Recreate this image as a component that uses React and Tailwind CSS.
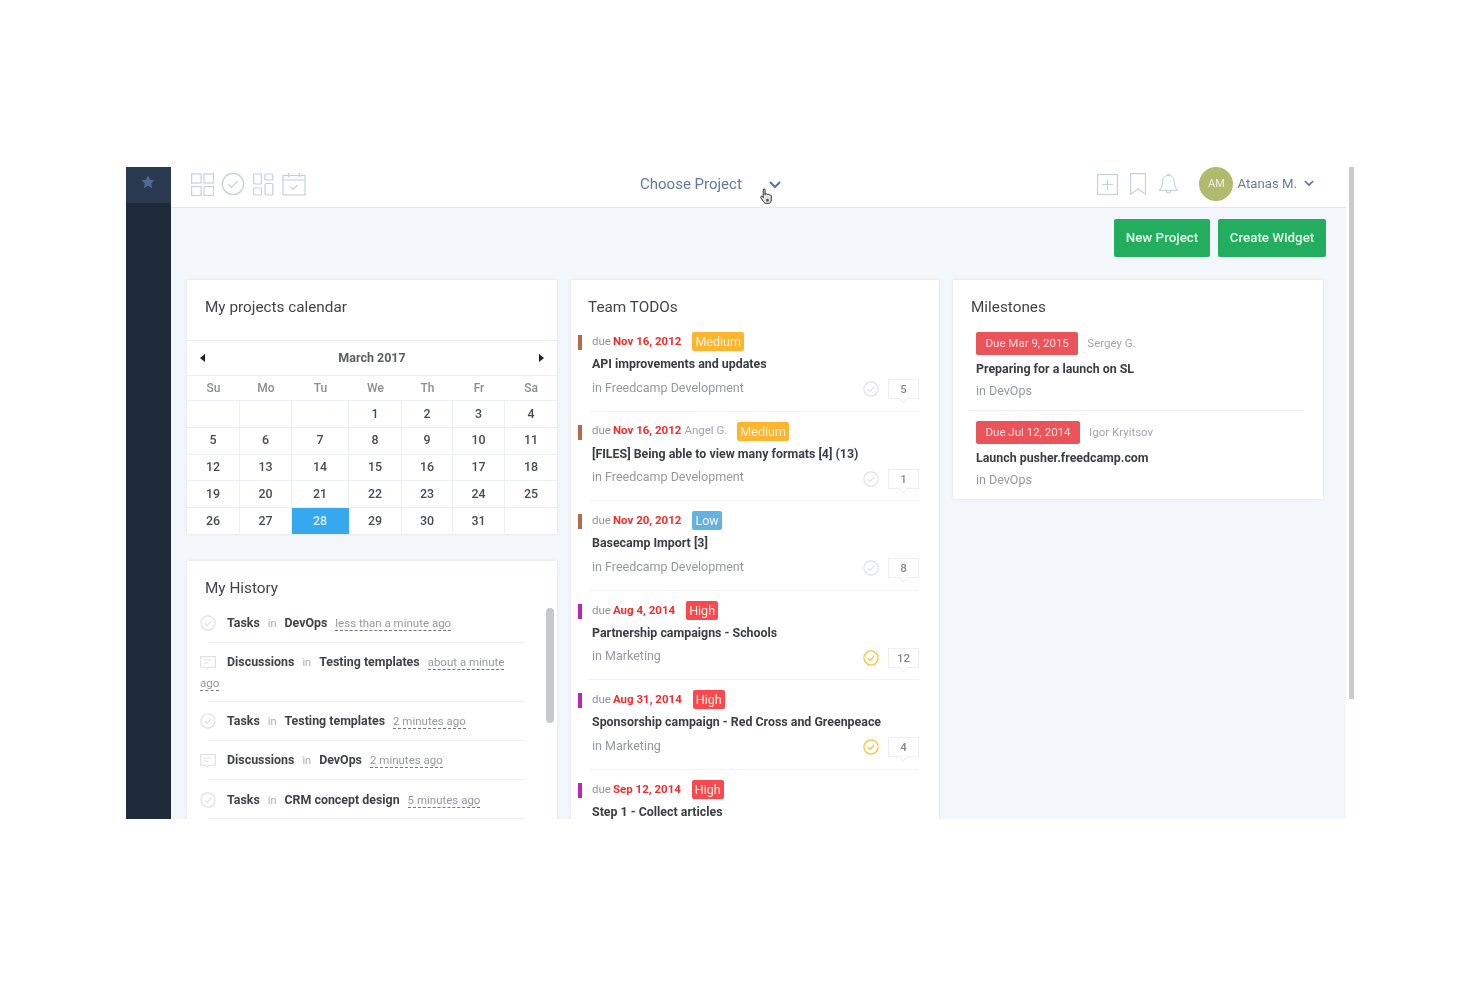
import React from "react";

const WEEKS = [
    ["", "", "", 1, 2, 3, 4],
    [5, 6, 7, 8, 9, 10, 11],
    [12, 13, 14, 15, 16, 17, 18],
    [19, 20, 21, 22, 23, 24, 25],
    [26, 27, 28, 29, 30, 31, ""],
];
const DAYS = ["Su", "Mo", "Tu", "We", "Th", "Fr", "Sa"];

const TODOS = [
    { date: "Nov 16, 2012", level: "Medium", bar: "bg-[#b5694a]", title: "API improvements and updates", project: "Freedcamp Development", count: 5 },
    { date: "Nov 16, 2012", who: "Angel G.", level: "Medium", bar: "bg-[#b5694a]", title: "[FILES] Being able to view many formats [4] (13)", project: "Freedcamp Development", count: 1 },
    { date: "Nov 20, 2012", level: "Low", bar: "bg-[#b5694a]", title: "Basecamp Import [3]", project: "Freedcamp Development", count: 8 },
    { date: "Aug 4, 2014", level: "High", bar: "bg-[#b726b5]", title: "Partnership campaigns - Schools", project: "Marketing", count: 12, active: true },
    { date: "Aug 31, 2014", level: "High", bar: "bg-[#b726b5]", title: "Sponsorship campaign - Red Cross and Greenpeace", project: "Marketing", count: 4, active: true },
    { date: "Sep 12, 2014", level: "High", bar: "bg-[#b726b5]", title: "Step 1 - Collect articles" },
];

const LEVEL_CLASS = {
    Medium: "bg-[#fdb52f]",
    Low: "bg-[#62b3e3]",
    High: "bg-[#f9484f]",
};

const HISTORY = [
    { kind: "Tasks", project: "DevOps", ago: "less than a minute ago", cls: "h-[39px] pt-[8.5px]" },
    { kind: "Discussions", project: "Testing templates", ago: "about a minute ago", cls: "h-[59px] pt-[8.5px]" },
    { kind: "Tasks", project: "Testing templates", ago: "2 minutes ago", cls: "h-[39px] pt-[8.5px]" },
    { kind: "Discussions", project: "DevOps", ago: "2 minutes ago", cls: "h-[39px] pt-[8.5px]" },
    { kind: "Tasks", project: "CRM concept design", ago: "5 minutes ago", cls: "h-[39px] pt-[9.5px]" },
];

const CheckCircle = ({ className, weight = 1.2 }) => (
    <svg viewBox="0 0 16 16" fill="none" stroke="currentColor" strokeWidth={weight} className={className}>
        <circle cx="8" cy="8" r="7.1" />
        <path d="M4.8 8.2l2.2 2.2 4.2-4.4" />
    </svg>
);

const CommentIcon = () => (
    <svg viewBox="0 0 16 16" fill="none" stroke="#dfe1e4" strokeWidth="1.1" className="w-4 h-4 shrink-0 inline-block">
        <path d="M.6 1.6h14.8v10.6H9l-1.6 2-1.6-2H.6z" />
        <path d="M3.5 5h8M3.5 8h5" />
    </svg>
);

const Card = ({ title, children, className = "" }) => (
    <div className={`bg-white shadow-[0_0_3px_rgba(60,80,110,0.12)] ${className}`}>
        <h2 className="pl-[18px] pt-[17px] text-[15.3px] leading-[21px] text-[#3f444b]">{title}</h2>
        {children}
    </div>
);

const Calendar = () => (
    <Card title="My projects calendar" className="h-[254px]">
        <div className="mt-[22px] h-[36px] border-t border-[#edf0f3] border-b flex items-center justify-between pl-[13px] pr-[13px]">
            <span className="w-0 h-0 border-y-[4px] border-y-transparent border-r-[5px] border-r-[#222]" />
            <span className="text-[12.5px] font-bold text-[#5b5f64]">March 2017</span>
            <span className="w-0 h-0 border-y-[4px] border-y-transparent border-l-[5px] border-l-[#222]" />
        </div>
        <div className="grid grid-cols-[53px_52px_57px_53px_51px_52px_52px] h-[24px] items-center text-center text-[12px] font-medium text-[#8a8d91]">
            {DAYS.map(d => <span key={d}>{d}</span>)}
        </div>
        {WEEKS.map((week, i) => (
            <div key={i} className="grid grid-cols-[53px_52px_57px_53px_51px_52px_52px] h-[26.8px] border-t border-[#edf0f3]">
                {week.map((d, j) => (
                    <div
                        key={j}
                        className={`flex items-center justify-center text-[12.4px] font-medium ${j < 6 ? "border-r" : ""} ${d === 28 ? "border-[#36a9ee] bg-[#36a9ee] text-[#dceefb]" : "border-[#edf0f3] text-[#484c52]"}`}
                    >
                        {d}
                    </div>
                ))}
            </div>
        ))}
    </Card>
);

const History = () => (
    <Card title="My History" className="mt-[27px] h-[300px] relative">
        <div className="absolute right-[3px] top-[47px] w-[8px] h-[115px] rounded-full bg-[#c6c8ca]" />
        <div className="mt-[5px] pl-[13px] pr-[32px]">
            {HISTORY.map((row, i) => (
                <div key={i} className={`relative text-[12.4px] leading-[20px] ${row.cls} after:absolute after:left-[8px] after:right-0 after:bottom-0 after:border-b after:border-[#f0f1f3]`}>
                    <span className="inline-block w-[27px] align-middle">
                        {row.kind === "Tasks"
                            ? <CheckCircle className="w-4 h-4 text-[#dfe1e4]" />
                            : <CommentIcon />}
                    </span>
                    <span className="font-bold text-[#3f4349]">{row.kind}</span>
                    <span className="mx-[8px] text-[#a9acb0] text-[11px]">in</span>
                    <span className="font-bold text-[#3f4349]">{row.project}</span>
                    <span className="ml-[8px] text-[#95999e] text-[11.5px] border-b border-dashed border-[#777]">{row.ago}</span>
                </div>
            ))}
        </div>
    </Card>
);

const Todo = ({ item }) => (
    <div className="relative h-[89.6px] pt-[10px] pl-[21px] pr-[20px]">
        <span className={`absolute left-[7px] top-[13px] w-[4px] h-[15px] ${item.bar}`} />
        <div className="flex items-center h-[19px] text-[11.5px]">
            <span className="text-[#909397]">due</span>
            <span className="ml-[2px] font-bold text-[#f22c2c]">{item.date}</span>
            {item.who && <span className="ml-[3px] text-[#a3a5a9]">{item.who}</span>}
            <span className={`${item.who ? "ml-[10px]" : "ml-[11px]"} h-[19px] px-[3px] rounded-[2px] leading-[19px] text-[12.5px] text-[#fff3dd] ${LEVEL_CLASS[item.level]}`}>{item.level}</span>
        </div>
        <div className="mt-[3px] text-[12.4px] leading-[20px] font-bold text-[#3a3e44]">{item.title}</div>
        {item.project && (
            <div className="mt-[4px] flex items-center justify-between h-[20px]">
                <span className="text-[12.5px] text-[#95989d]">in {item.project}</span>
                <div className="flex items-center gap-[9px] pt-[2px]">
                    <CheckCircle className={`w-4 h-4 ${item.active ? "text-[#fcc22e]" : "text-[#dfe1e4]"}`} />
                    <span className="relative w-[31px] h-[20px] border border-[#eceef0] text-center text-[11.5px] leading-[18px] font-medium text-[#85888d]">
                        {item.count}
                        <span className="absolute left-[11px] bottom-[-4px] w-[7px] h-[7px] rotate-45 bg-white border-r border-b border-[#eceef0]" />
                    </span>
                </div>
            </div>
        )}
        <div className="absolute left-[18px] right-[20px] bottom-0 border-b border-[#f2f3f5]" />
    </div>
);

const Milestone = ({ due, who, title, last }) => (
    <div className={`h-[89px] pt-[10px] ml-[15px] mr-[19px] pl-[8px] ${last ? "" : "border-b border-[#f0f1f3]"}`}>
        <div className="flex items-center text-[11.5px]">
            <span className="h-[23px] px-[9.5px] rounded-[2px] bg-[#ea5359] leading-[23px] text-[#fbdcdc]">{due}</span>
            <span className="ml-[9px] text-[#a3a5a9]">{who}</span>
        </div>
        <div className="mt-[4px] text-[12.4px] leading-[20px] font-bold text-[#3a3e44]">{title}</div>
        <div className="mt-[2px] text-[12.5px] leading-[20px] text-[#95989d]">in DevOps</div>
    </div>
);

const HandCursor = () => (
    <svg viewBox="0 0 16 18" className="absolute left-[-10px] top-[7px] w-[15px] h-[17px]">
        <path d="M4.5 2c0-1.4 2-1.4 2 0v5l.4-.8c1.4-.4 2 .1 2.2.6 1-.5 1.9-.2 2.1.5.9-.3 1.9.2 1.9 1.2v4.2c0 2-1.2 3.600-3 3.600H7.500c-1.300 0-2-.7-2.600-1.600L2 10.300c-.8-1.200.8-2.300 1.700-1.200l.8 1z" fill="#e4e4e4" stroke="#222" strokeWidth="1" />
        <circle cx="9" cy="13" r="1.500" fill="#555" />
    </svg>
);

export default function App() {
    return (
        <div className="min-h-[987px] bg-white pt-[167px] pl-[126px] flex items-start font-['Roboto',sans-serif] blur-[0.5px]">
            <div className="w-[1220px] h-[652px] overflow-hidden flex bg-[#f3f6fa]">
                {/* Sidebar */}
                <div className="w-[45px] shrink-0 bg-[#1f2b3a]">
                    <div className="h-[36px] bg-[#2a3a50] flex items-start justify-center pt-[7px] pr-[1px]">
                        <svg viewBox="0 0 24 24" className="w-[16px] h-[16px]" fill="#4d6a94">
                            <path d="M12 2l3 6.600 7 .8-5.200 4.800 1.500 7.100L12 17.700l-6.300 3.600 1.500-7.100L2 9.400l7-.8z" />
                        </svg>
                    </div>
                </div>

                <div className="flex-1 min-w-0">
                    {/* Top bar */}
                    <div className="h-[41px] bg-white border-b border-[#e2e8f1] flex items-center pb-[6px] pl-[20px] pr-[32px]">
                        <div className="flex items-center w-[449px] gap-[7px] text-[#c4d0de]">
                            <svg viewBox="0 0 23 23" className="w-[23px] h-[23px]" fill="none" stroke="currentColor" strokeWidth="1.200">
                                <rect x="0.600" y="1" width="9.500" height="9" /><rect x="13" y="1" width="9.500" height="9" />
                                <rect x="0.600" y="13.500" width="9.500" height="9" /><rect x="13" y="13.500" width="9.500" height="9" />
                            </svg>
                            <CheckCircle className="w-[24px] h-[24px]" weight={0.85} />
                            <svg viewBox="0 0 21 23" className="ml-[1px] w-[21px] h-[23px]" fill="none" stroke="currentColor" strokeWidth="1.200">
                                <rect x="0.600" y="1" width="7.800" height="10" rx="1" /><rect x="12" y="1" width="7.800" height="6" rx="1" />
                                <rect x="0.600" y="15" width="7.800" height="7" rx="1" /><rect x="12" y="10.500" width="7.800" height="11.500" rx="1" />
                            </svg>
                            <svg viewBox="0 0 24 24" className="ml-[1px] w-[24px] h-[24px]" fill="none" stroke="currentColor" strokeWidth="1.200">
                                <rect x="1" y="3.500" width="22" height="19.500" />
                                <path d="M1 8h22M6.500 1v4M17.500 1v4M8.500 15l2.500 2.500 4.500-4.500" />
                            </svg>
                        </div>
                        <span className="text-[15px] text-[#5f7a9c]">Choose Project</span>
                        <span className="relative ml-[27px] mt-[2px]">
                            <svg viewBox="0 0 12 8" className="w-[12px] h-[8px]" fill="none" stroke="#5a7698" strokeWidth="2"><path d="M1 1l5 5 5-5" /></svg>
                            <HandCursor />
                        </span>
                        <div className="ml-auto flex items-center text-[#c4d0de]">
                            <svg viewBox="0 0 22 22" className="w-[21px] h-[21px]" fill="none" stroke="currentColor" strokeWidth="1.200">
                                <rect x="0.600" y="0.600" width="20.800" height="20.800" /><path d="M11 5.500v11M5.500 11h11" />
                            </svg>
                            <svg viewBox="0 0 16 22" className="ml-[11px] w-[18px] h-[22px]" fill="none" stroke="currentColor" strokeWidth="1.100">
                                <path d="M.6.6h14.800v20.600L8 16 .6 21.200z" />
                            </svg>
                            <svg viewBox="0 0 20 22" className="ml-[11px] w-[21px] h-[22px]" fill="none" stroke="currentColor" strokeWidth="1.100">
                                <path d="M10 2.500c-3.500 0-5.800 2.600-5.800 6 0 4.500-1 6.500-3.200 9h18c-2.200-2.500-3.200-4.500-3.200-9 0-3.400-2.300-6-5.800-6zM8.500 2.500c0-2 3-2 3 0M8 18c0 2.800 4 2.800 4 0" />
                            </svg>
                            <span className="ml-[20px] w-[34px] h-[34px] rounded-full bg-[#b0bb6e] flex items-center justify-center text-[11px] text-[#eef0dc]">AM</span>
                            <span className="ml-[4px] text-[13.2px] text-[#6b7c90]">Atanas M.</span>
                            <svg viewBox="0 0 12 8" className="ml-[7px] w-[10px] h-[7px] mb-[2px]" fill="none" stroke="#5a7698" strokeWidth="2"><path d="M1 1l5 5 5-5" /></svg>
                        </div>
                    </div>

                    {/* Toolbar */}
                    <div className="flex justify-end gap-[8px] pt-[11px] pr-[20px]">
                        <button className="w-[96px] h-[38px] rounded-[2px] bg-[#22ad5f] text-[13.4px] font-medium text-[#e6f6ec]">New Project</button>
                        <button className="w-[108px] h-[38px] rounded-[2px] bg-[#22ad5f] text-[13.4px] font-medium text-[#e6f6ec]">Create Widget</button>
                    </div>

                    {/* Widgets */}
                    <div className="mt-[23px] pl-[16px] grid grid-cols-[370px_368px_370px] gap-x-[14px] items-start">
                        <div>
                            <Calendar />
                            <History />
                        </div>
                        <Card title="Team TODOs" className="h-[600px] [&>h2]:pl-[17px]">
                            <div className="mt-[4px]">
                                {TODOS.map((t, i) => <Todo key={i} item={t} />)}
                            </div>
                        </Card>
                        <Card title="Milestones" className="h-[219px]">
                            <div className="mt-[4px]">
                                <Milestone due="Due Mar 9, 2015" who="Sergey G." title="Preparing for a launch on SL" />
                                <Milestone due="Due Jul 12, 2014" who="Igor Kryitsov" title="Launch pusher.freedcamp.com" last />
                            </div>
                        </Card>
                    </div>
                </div>
            </div>
            <div className="ml-[3px] w-[5px] h-[532px] bg-[#c9cbcd]" />
        </div>
    );
}
